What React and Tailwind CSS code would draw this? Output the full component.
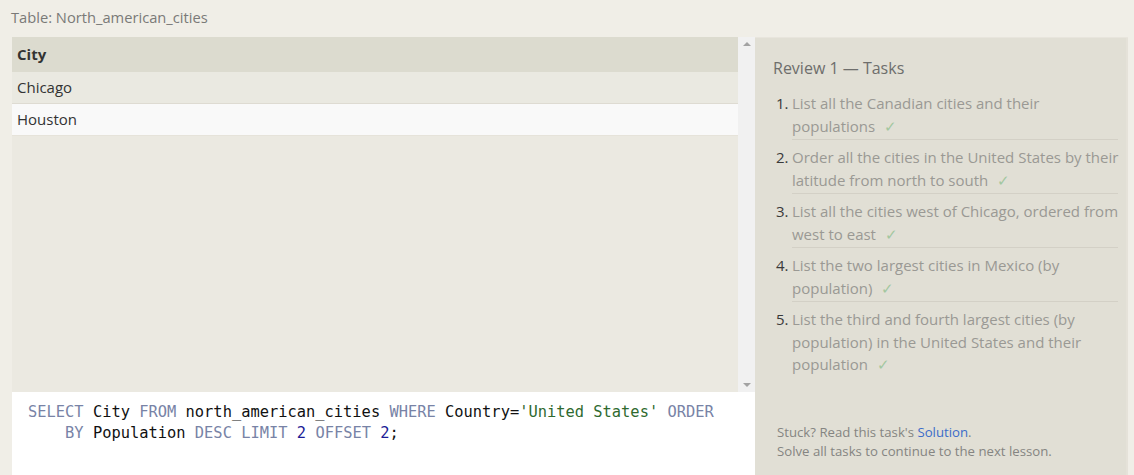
const tasks = [
  ['List all the Canadian cities and their', 'populations'],
  ['Order all the cities in the United States by their', 'latitude from north to south'],
  ['List all the cities west of Chicago, ordered from', 'west to east'],
  ['List the two largest cities in Mexico (by', 'population)'],
  ['List the third and fourth largest cities (by', 'population) in the United States and their', 'population'],
];

const sans = { fontFamily: '"Open Sans", "Noto Sans", sans-serif' };

function Kw({ children }) {
  return <span className="text-[#7883a6]">{children}</span>;
}

export default function App() {
  return (
    <div className="w-[1134px] h-[475px] overflow-hidden bg-[#f0eee7]" style={sans}>
      <div className="h-[37px] pl-[11px] pt-[7px] text-[14.7px] text-[#7a7a78] leading-[20px]">
        Table: North_american_cities
      </div>
      <div className="flex h-[438px]">
        <div className="ml-[12px] w-[743px] flex flex-col">
          <div className="flex h-[355px]">
            <div className="flex-1 bg-[#ebe9e1] flex flex-col">
              <div className="h-[35px] bg-[#dcdbcf] pl-[5px] flex items-center text-[15px] font-bold text-[#333]">City</div>
              <div className="h-[32px] bg-[#eae9e1] border-b border-[#dedbd2] pl-[5px] flex items-center text-[15px] text-[#333]">Chicago</div>
              <div className="h-[32px] bg-[#f9f9f9] border-b border-[#e6e3da] pl-[5px] flex items-center text-[15px] text-[#333]">Houston</div>
            </div>
            <div className="w-[17px] bg-[#f1f1f1] flex flex-col justify-between items-center py-[5px]">
              <div className="w-0 h-0 border-l-[4px] border-r-[4px] border-b-[4px] border-l-transparent border-r-transparent border-b-[#a3a3a3]" />
              <div className="w-0 h-0 border-l-[4px] border-r-[4px] border-t-[4px] border-l-transparent border-r-transparent border-t-[#a3a3a3]" />
            </div>
          </div>
          <div
            className="flex-1 bg-white pl-[16px] pt-[10px] text-[15.4px] leading-[21px] text-[#111] whitespace-pre"
            style={{ fontFamily: '"DejaVu Sans Mono", "Liberation Mono", monospace' }}
          >
            <div>
              <Kw>SELECT</Kw> City <Kw>FROM</Kw> north_american_cities <Kw>WHERE</Kw> Country=<span className="text-[#2f6a2f]">'United States'</span> <Kw>ORDER</Kw>
            </div>
            <div>
              {'    '}<Kw>BY</Kw> Population <Kw>DESC</Kw> <Kw>LIMIT</Kw> <span className="text-[#1c1c96]">2</span> <Kw>OFFSET</Kw> <span className="text-[#1c1c96]">2</span>;
            </div>
          </div>
        </div>
        <div className="w-[373px] bg-[#e1dfd5] border-t border-[#e8e5dd] flex">
          <div className="flex-1 flex flex-col pl-[18px] pr-[8px]">
            <div className="pt-[19px] text-[16px] text-[#6e6e6c] leading-[22px]">Review 1 — Tasks</div>
            <div className="mt-[7px]">
              {tasks.map((lines, i) => (
                <div key={i} className="flex">
                  <div className="w-[19px] pl-[3px] pt-[6px] text-[15px] leading-[22.5px] text-[#3a3a3a]">{i + 1}.</div>
                  <div className={`flex-1 pt-[6px] pb-[2px] text-[15px] leading-[22.5px] text-[#9a9994] whitespace-nowrap ${i < tasks.length - 1 ? 'border-b border-[#d3d0c6]' : ''}`}>
                    {lines.map((l, j) => (
                      <div key={j}>
                        {l}
                        {j === lines.length - 1 && <span className="ml-[9px] text-[#a3c7a0]">✓</span>}
                      </div>
                    ))}
                  </div>
                </div>
              ))}
            </div>
            <div className="mt-auto pb-[14px] pl-[4px] text-[13.2px] leading-[19px] text-[#858582]">
              <div>
                Stuck? Read this task's <span className="text-[#3b6cc9]">Solution</span>.
              </div>
              <div>Solve all tasks to continue to the next lesson.</div>
            </div>
          </div>
          <div className="w-[7px] bg-[#e5e2d9]" />
        </div>
      </div>
    </div>
  );
}
